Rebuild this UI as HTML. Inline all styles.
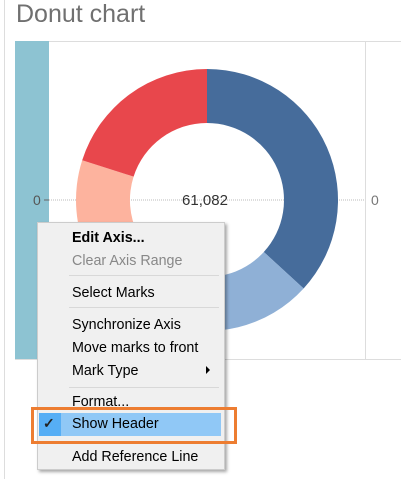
<!DOCTYPE html>
<html><head><style>
body{margin:0;width:401px;height:479px;background:#fff;position:relative;overflow:hidden;font-family:"Segoe UI","Liberation Sans",sans-serif}
.t{position:absolute;left:16px;top:0px;font-size:25px;color:#707070}
.m{position:absolute;left:37px;top:222px;width:186px;height:246px;background:#f0f0f0;border:1px solid #ccc;box-shadow:2px 2px 3px rgba(0,0,0,.35)}
.i{position:absolute;left:34px;font-size:14.3px;color:#000;line-height:18px}
.s{position:absolute;left:31px;width:150px;height:1px;background:#d8d8d8}
</style></head><body>
<div style="position:absolute;left:4px;top:0;width:1px;height:479px;background:#ddd"></div>
<div class="t">Donut chart</div>
<div style="position:absolute;left:15px;top:41px;width:386px;height:1px;background:#ddd"></div>
<div style="position:absolute;left:15px;top:359px;width:386px;height:1px;background:#ddd"></div>
<div style="position:absolute;left:365px;top:41px;width:1px;height:318px;background:#ddd"></div>
<div style="position:absolute;left:15px;top:41px;width:34px;height:318px;background:#8dc3d2"></div>
<svg width="401" height="479" style="position:absolute;left:0;top:0">
<line x1="49" y1="200" x2="365" y2="200" stroke="#bbb" stroke-dasharray="1,1"/>
<line x1="44" y1="200" x2="49" y2="200" stroke="#666"/>
<g transform="translate(207,200)">
<path d="M0,-131 A131,131 0 0 1 96.6,88.5 L56.8,52 A77,77 0 0 0 0,-77Z" fill="#466c9b"/>
<path d="M96.6,88.5 A131,131 0 0 1 -44.8,123.1 L-26.3,72.4 A77,77 0 0 0 56.8,52Z" fill="#8fb0d6"/>
<path d="M-44.8,123.1 A131,131 0 0 1 -124.8,-39.8 L-73.4,-23.4 A77,77 0 0 0 -26.3,72.4Z" fill="#fdb39e"/>
<path d="M-124.8,-39.8 A131,131 0 0 1 0,-131 L0,-77 A77,77 0 0 0 -73.4,-23.4Z" fill="#e8474c"/>
</g>
<text x="205" y="205" font-family="Liberation Sans,sans-serif" font-size="15" fill="#333" text-anchor="middle">61,082</text>
<text x="33" y="205" font-family="Liberation Sans,sans-serif" font-size="14" fill="#555">0</text>
<text x="371" y="205" font-family="Liberation Sans,sans-serif" font-size="14" fill="#777">0</text>
</svg>
<div class="m">
<div class="i" style="top:6px;font-weight:bold">Edit Axis...</div>
<div class="i" style="top:29px;color:#888">Clear Axis Range</div>
<div class="s" style="top:52px"></div>
<div class="i" style="top:61px">Select Marks</div>
<div class="s" style="top:84px"></div>
<div class="i" style="top:93px">Synchronize Axis</div>
<div class="i" style="top:116px">Move marks to front</div>
<div class="i" style="top:139px">Mark Type</div>
<div style="position:absolute;left:168px;top:143px;width:0;height:0;border-left:4px solid #000;border-top:4px solid transparent;border-bottom:4px solid transparent"></div>
<div class="s" style="top:164px"></div>
<div class="i" style="top:170px">Format...</div>
<div style="position:absolute;left:1px;top:190px;width:182px;height:23px;background:#90c8f6"></div>
<div style="position:absolute;left:1px;top:190px;width:22px;height:23px;background:#56aef5"></div>
<div style="position:absolute;left:5px;top:192px;font-size:14px;color:#222;font-weight:bold">✓</div>
<div class="i" style="top:192px">Show Header</div>
<div class="i" style="top:225px">Add Reference Line</div>
</div>
<div style="position:absolute;left:31px;top:407px;width:200px;height:31px;border:3px solid #ed7d31"></div>
</body></html>
